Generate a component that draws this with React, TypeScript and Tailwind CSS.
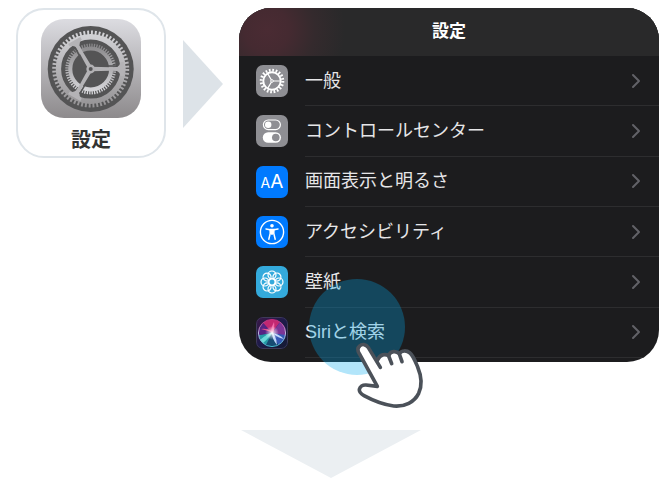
import React from "react"

const SettingsAppIcon = () => (
  <svg viewBox="0 0 100 99" className="h-[99px] w-[100px]" aria-hidden="true">
    <defs>
      <linearGradient id="plate" x1="0" y1="0" x2="0" y2="1">
        <stop offset="0" stopColor="#dcdce1" />
        <stop offset="1" stopColor="#8d8a8c" />
      </linearGradient>
      <linearGradient
        id="gear"
        gradientUnits="userSpaceOnUse"
        x1="0"
        y1="-40"
        x2="0"
        y2="40"
      >
        <stop offset="0" stopColor="#d6d6da" />
        <stop offset="1" stopColor="#939193" />
      </linearGradient>
      <linearGradient
        id="innerGear"
        gradientUnits="userSpaceOnUse"
        x1="0"
        y1="-26"
        x2="0"
        y2="26"
      >
        <stop offset="0" stopColor="#858486" />
        <stop offset="1" stopColor="#dcdce0" />
      </linearGradient>
    </defs>
    <rect width="100" height="99" rx="23" fill="url(#plate)" />
    <g transform="translate(49.7 50)" fill="none">
      <circle r="43" fill="#545455" />
      <circle
        r="36"
        stroke="url(#gear)"
        strokeWidth="5"
        strokeDasharray="1.9 1.87"
      />
      <circle r="32.3" stroke="url(#gear)" strokeWidth="5.4" />
      <circle
        r="23.4"
        stroke="url(#innerGear)"
        strokeWidth="4"
        strokeDasharray="1.3 1.15"
      />
      <circle r="20.4" stroke="url(#innerGear)" strokeWidth="4" />
      {[0, 120, 240].map((angle) => (
        <g key={angle} transform={`rotate(${angle})`}>
          <path
            d="M0 -2.2 L20 -1.7 L26 -2 Q29 -3 30 -7 L33 -7 L33 7 L30 7 Q29 3 26 2 L20 1.7 L0 2.2Z"
            fill="#b4b3b6"
          />
          <path d="M17 -3 H27" stroke="#545455" strokeWidth="1.6" />
        </g>
      ))}
      <circle r="4.4" fill="#b2b1b4" />
      <circle r="2" fill="#545455" />
    </g>
  </svg>
)

const GeneralIcon = () => (
  <svg viewBox="-16 -16 32 32" className="size-full" fill="none" stroke="#fff">
    <circle r="8.7" strokeWidth="1.9" />
    <circle r="10.8" strokeWidth="3" strokeDasharray="1.7 1.69" />
    <path d="M0 0H8.5M0 0L-4.3 -7.4M0 0L-4.3 7.4" strokeWidth="1.2" />
    <circle r="1.3" fill="#8e8e93" strokeWidth="1" />
  </svg>
)

const ControlCenterIcon = () => (
  <svg viewBox="-16 -16 32 32" className="size-full" fill="none">
    <rect x="-8.6" y="-11" width="17" height="9.6" rx="4.8" stroke="#fff" strokeWidth="1.2" />
    <circle cx="-3.8" cy="-6.2" r="3.2" fill="#fff" />
    <rect x="-9.2" y="1.2" width="18.2" height="10.6" rx="5.3" fill="#fff" />
    <circle cx="3.8" cy="6.5" r="3.8" fill="#8e8e93" />
  </svg>
)

const DisplayIcon = () => (
  <span className="flex items-baseline font-['Inter',sans-serif] leading-none text-white">
    <span className="text-[14px]">A</span>
    <span className="text-[19px]">A</span>
  </span>
)

const AccessibilityIcon = () => (
  <svg viewBox="-16 -16 32 32" className="size-full" fill="none" stroke="#fff">
    <circle r="11.6" strokeWidth="1.4" />
    <circle cy="-6.2" r="1.8" fill="#fff" stroke="none" />
    <path d="M-6 -3 L-2 -2.2 H2 L6 -3" strokeWidth="1.5" strokeLinecap="round" />
    <path
      d="M-1.9 -2.6 H1.9 L1.8 1.5 L3.2 7.3 M-1.9 -2.6 L-1.8 1.5 L-3.2 7.3"
      strokeWidth="1.5"
      strokeLinecap="round"
    />
    <path d="M-2 -2.6H2L1.7 2L0 3L-1.7 2Z" fill="#fff" stroke="none" />
  </svg>
)

const WallpaperIcon = () => (
  <svg viewBox="-16 -16 32 32" className="size-full" fill="none" stroke="#fff" strokeWidth="1.2">
    {[0, 45, 90, 135, 180, 225, 270, 315].map((angle) => (
      <circle key={angle} cx="7" r="4" transform={`rotate(${angle})`} />
    ))}
    <circle r="3.4" />
  </svg>
)

const SiriIcon = () => (
  <svg viewBox="-16 -16 32 32" className="size-full">
    <defs>
      <linearGradient id="siriPlate" x1="0" y1="0" x2="1" y2="1">
        <stop offset="0" stopColor="#3c1747" />
        <stop offset="0.5" stopColor="#1d1b4a" />
        <stop offset="1" stopColor="#131a30" />
      </linearGradient>
      <radialGradient id="siriGlow">
        <stop offset="0" stopColor="#fff" />
        <stop offset="0.35" stopColor="#fff" stopOpacity="0.55" />
        <stop offset="1" stopColor="#fff" stopOpacity="0" />
      </radialGradient>
      <linearGradient id="siriRing" x1="0" y1="0" x2="0" y2="1">
        <stop offset="0" stopColor="#c02a78" />
        <stop offset="0.5" stopColor="#b9b6dc" />
        <stop offset="1" stopColor="#3fb6c8" />
      </linearGradient>
    </defs>
    <rect x="-16" y="-16" width="32" height="32" fill="url(#siriPlate)" />
    <rect x="-15.5" y="-15.5" width="31" height="31" rx="6.5" fill="none" stroke="#3d3a58" />
    <circle r="13.6" fill="#2b2470" />
    <path d="M0 0L-9 -10A13.5 13.5 0 0 1 8 -11Z" fill="#c32872" />
    <path d="M0 0L8 -11A13.5 13.5 0 0 1 13.5 3Z" fill="#7c3597" />
    <path d="M0 0L13.5 2A13.5 13.5 0 0 1 6 12Z" fill="#3558b4" />
    <path d="M0 0L6 12A13.5 13.5 0 0 1 -6 12Z" fill="#164b72" />
    <path d="M0 0L-6 12A13.5 13.5 0 0 1 -13.3 2Z" fill="#249ba6" />
    <path d="M0 0L-13.3 2A13.5 13.5 0 0 1 -9 -10Z" fill="#572384" />
    <path d="M-12 7Q-4 0 1 -1Q-5 7 -9 10Z" fill="#69d9d8" />
    <path d="M0 0Q7 1 12 6Q6 5 2 1Q5 7 5 12Q0 6 0 0Z" fill="#bfd5fa" />
    <path d="M-1 -1Q-1 -6 2 -11Q3 -4 1 0Z" fill="#f36bab" />
    <path d="M-1 -1Q-7 -3 -11 -4Q-6 -5 0 -2Z" fill="#e9508d" />
    <circle r="7" fill="url(#siriGlow)" />
    <circle r="13.6" fill="none" stroke="url(#siriRing)" strokeWidth="1" />
  </svg>
)

const Chevron = () => (
  <svg
    viewBox="0 0 10 16"
    className="h-4 w-[10px]"
    fill="none"
    stroke="#626267"
    strokeWidth="2"
    strokeLinecap="round"
    strokeLinejoin="round"
    aria-hidden="true"
  >
    <path d="M2 2L8 8L2 14" />
  </svg>
)

const PointingHand = () => (
  <svg
    viewBox="0 0 240 255"
    className="h-[85px] w-20"
    fill="#fff"
    stroke="#4b5159"
    strokeWidth="11"
    strokeLinecap="round"
    strokeLinejoin="round"
  >
    <path d="M91 112L55 53C48 42 36 41 29 48C22 54 23 63 28 71L82 169L48 165C38 164 30 170 28 178C27 186 33 192 42 197C66 210 99 224 131 228C165 231 193 216 206 190C219 162 213 135 203 111C195 92 189 76 180 69C169 60 155 61 148 71C138 62 122 62 116 77C105 71 90 73 84 88" />
    <path d="M116 78L125 101M148 72L156 95" fill="none" />
  </svg>
)

const items = [
  { label: "一般", color: "bg-[#8e8e93]", icon: <GeneralIcon /> },
  { label: "コントロールセンター", color: "bg-[#8e8e93]", icon: <ControlCenterIcon /> },
  { label: "画面表示と明るさ", color: "bg-[#007aff]", icon: <DisplayIcon /> },
  { label: "アクセシビリティ", color: "bg-[#007aff]", icon: <AccessibilityIcon /> },
  { label: "壁紙", color: "bg-[#34aadc]", icon: <WallpaperIcon /> },
  { label: "Siriと検索", color: "bg-[#1d1b4a]", icon: <SiriIcon /> },
]

const SettingsRow = ({ label, color, icon }) => {
  return (
    <li className="pl-[17px]">
      <button className="flex h-full w-full items-center gap-[17px] text-left">
        <span
          className={`flex size-8 shrink-0 items-center justify-center overflow-hidden rounded-[7px] ${color}`}
          aria-hidden="true"
        >
          {icon}
        </span>
        <span className="flex h-full flex-1 items-center justify-between border-b border-[#2d2d2f] pr-[18px] text-lg text-[#e6e6e8]">
          {label}
          <Chevron />
        </span>
      </button>
    </li>
  )
}

const SettingsPanel = () => {
  return (
    <section className="relative">
      <div className="overflow-hidden rounded-[32px] bg-[#1c1c1e] pb-1">
        <header className="flex h-12 items-center justify-center bg-[#29292a] bg-[radial-gradient(circle_at_28px_22px,#4a2b33_0,#452a31_22px,#342a2d_48px,#29292a_78px)]">
          <h2 className="text-[17px] font-bold text-white">設定</h2>
        </header>
        <ul className="grid h-[302px] grid-rows-6">
          {items.map((item) => (
            <SettingsRow key={item.label} {...item} />
          ))}
        </ul>
      </div>
      {/* tap marker */}
      <div className="pointer-events-none absolute top-[271px] left-[70px] size-24 rounded-full bg-[#00aaf0]/30" />
      <div className="pointer-events-none absolute top-[322px] left-[111px]">
        <PointingHand />
      </div>
    </section>
  )
}

const App = () => {
  return (
    <main
      lang="ja"
      className="flex items-start bg-white pt-2 pr-[13px] pl-4 font-['Liberation_Sans','Noto_Sans_CJK_JP',sans-serif]"
    >
      <button className="flex h-[150px] w-[150px] shrink-0 flex-col items-center rounded-[28px] border-2 border-[#dfe5ea] pt-[9px]">
        <SettingsAppIcon />
        <span className="mt-2 text-xl font-bold text-[#333]">設定</span>
      </button>
      <svg viewBox="0 0 40 88" className="mt-8 mr-4 ml-[17px] h-[88px] w-10 shrink-0" aria-hidden="true">
        <path d="M0 0L40 44L0 88Z" fill="#dde3e8" />
      </svg>
      <div className="flex-1">
        <SettingsPanel />
        <svg viewBox="0 0 180 48" className="mt-[68px] ml-[2px] h-12 w-[180px]" aria-hidden="true">
          <path d="M0 0H180L90 48Z" fill="#ebeff2" />
        </svg>
      </div>
    </main>
  )
}

export default App
